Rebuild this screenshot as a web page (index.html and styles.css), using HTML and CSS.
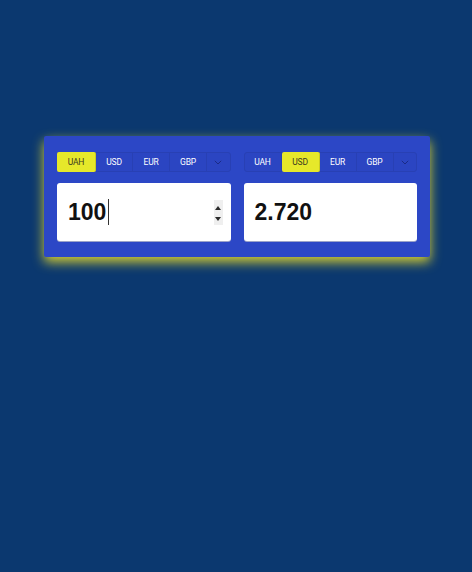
FILE: index.html
```html
<!DOCTYPE html>
<html lang="en">
<head>
<meta charset="utf-8">
<title>Currency converter</title>
<link rel="stylesheet" href="styles.css">
</head>
<body>
<div class="card">
  <div class="col">
    <div class="tabs">
      <div class="tab active">UAH</div>
      <div class="tab">USD</div>
      <div class="tab">EUR</div>
      <div class="tab">GBP</div>
      <div class="tab more"><svg width="8" height="5" viewBox="0 0 8 5"><path d="M0.8 0.8 L4 4 L7.2 0.8" fill="none" stroke="#1b2b86" stroke-width="1"/></svg></div>
    </div>
    <div class="field">
      <span class="value">100</span><span class="caret"></span>
      <div class="spin">
        <span class="up"></span>
        <span class="down"></span>
      </div>
    </div>
  </div>
  <div class="col">
    <div class="tabs">
      <div class="tab">UAH</div>
      <div class="tab active">USD</div>
      <div class="tab">EUR</div>
      <div class="tab">GBP</div>
      <div class="tab more"><svg width="8" height="5" viewBox="0 0 8 5"><path d="M0.8 0.8 L4 4 L7.2 0.8" fill="none" stroke="#1b2b86" stroke-width="1"/></svg></div>
    </div>
    <div class="field">
      <span class="value">2.720</span>
    </div>
  </div>
</div>
</body>
</html>
```
FILE: styles.css
```css
html, body {
  margin: 0;
  padding: 0;
}
body {
  background: #0b386f;
  height: 572px;
  font-family: "Liberation Sans", Arial, sans-serif;
}
.card {
  margin: 136px 0 0 44px;
  width: 386px;
  box-sizing: border-box;
  padding: 16px 13px;
  background: #2c47c6;
  border-radius: 2px;
  display: grid;
  grid-template-columns: 1fr 1fr;
  column-gap: 13px;
  box-shadow: 0 5px 12px rgba(226, 214, 44, 0.95);
}
.col {
  display: flex;
  flex-direction: column;
  gap: 11px;
}
.tabs {
  display: flex;
  height: 20px;
  box-sizing: border-box;
  border: 1px solid #2840b4;
  border-radius: 3px;
  background: #2b45c2;
}
.tab {
  flex: 0 0 37px;
  display: flex;
  align-items: center;
  justify-content: center;
  font-family: Roboto, "Liberation Sans", sans-serif;
  font-size: 8.5px;
  letter-spacing: -0.2px;
  color: #ffffff;
  border-right: 1px solid #2840b4;
  box-sizing: border-box;
}
.tab.active {
  background: #e6e82a;
  color: #3a3a20;
  margin: -1px 0 -1px -1px;
  flex-basis: 39px;
  border-radius: 2px;
  border-right: 1px solid #c9ca22;
}
.tabs .tab.active:not(:first-child) {
  margin-left: 0;
  flex-basis: 38px;
}
.tab.more {
  flex: 1 1 auto;
  border-right: none;
}
.field {
  height: 58px;
  background: #ffffff;
  border-radius: 3px;
  box-shadow: 0 1px 0 #9ba3c8;
  display: flex;
  align-items: center;
  padding: 0 8px 0 11px;
}
.value {
  font-size: 23px;
  font-weight: bold;
  color: #111111;
}
.caret {
  display: inline-block;
  width: 1px;
  height: 26px;
  background: #333333;
  margin-left: 2px;
}
.spin {
  margin-left: auto;
  width: 9px;
  height: 25px;
  background: #efefef;
  display: flex;
  flex-direction: column;
  align-items: center;
  justify-content: space-between;
  padding: 6px 0 4px;
  box-sizing: border-box;
}
.up {
  width: 0;
  height: 0;
  border-left: 3px solid transparent;
  border-right: 3px solid transparent;
  border-bottom: 4px solid #2a2a2a;
}
.down {
  width: 0;
  height: 0;
  border-left: 3px solid transparent;
  border-right: 3px solid transparent;
  border-top: 4px solid #2a2a2a;
}
```
